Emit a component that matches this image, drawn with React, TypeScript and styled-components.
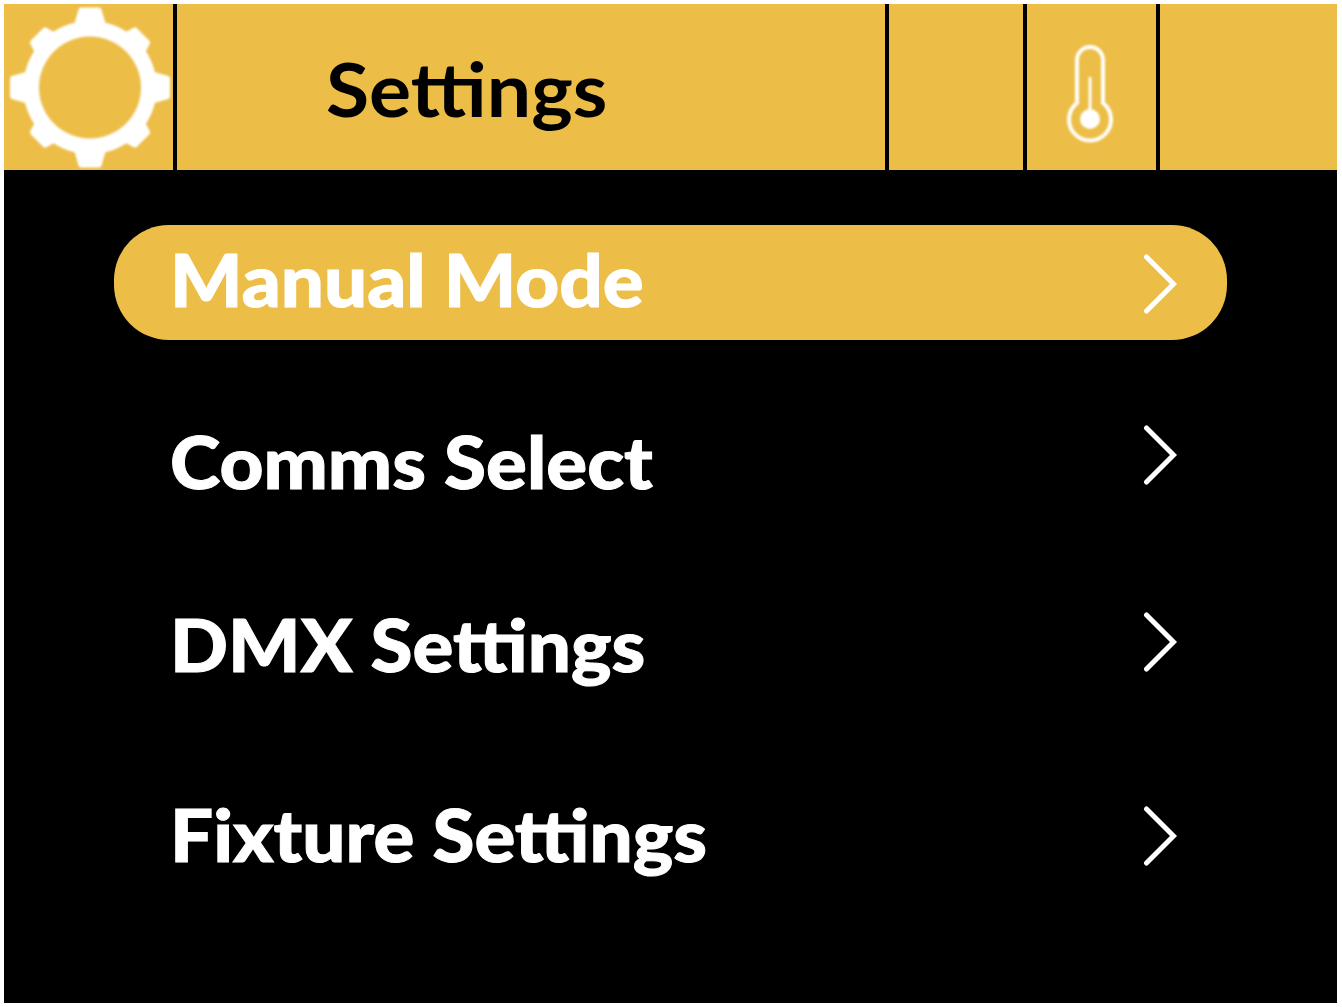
import React from 'react';
import styled, { createGlobalStyle } from 'styled-components';

const GlobalStyle = createGlobalStyle`
  html, body {
    margin: 0;
    padding: 0;
    background: #fff;
  }
`;

const Screen = styled.div`
  width: 1333px;
  height: 999px;
  margin: 4px 0 0 4px;
  background: #000;
  font-family: Lato, 'Open Sans', sans-serif;
  overflow: hidden;
`;

const Header = styled.header`
  height: 166px;
  background: #edbe47;
  display: grid;
  grid-template-columns: 169px 4px 708px 4px 134px 4px 129px 4px 1fr;
`;

const Divider = styled.div`
  background: #000;
`;

const Cell = styled.div`
  display: flex;
  align-items: center;
  justify-content: center;
  min-width: 0;
`;

const Title = styled.h1`
  margin: 2px 0 0 149px;
  width: 100%;
  font-size: 75px;
  font-weight: 700;
  line-height: 1;
  color: #000;
  transform: scaleX(1.05);
  transform-origin: 0 50%;
`;

const Menu = styled.nav`
  display: flex;
  flex-direction: column;
  padding: 55px 110px 0;
`;

const Row = styled.div<{ $active?: boolean; $top: number }>`
  height: 115px;
  margin-top: ${(p) => p.$top}px;
  padding: 0 48px 0 56px;
  border-radius: 55px;
  background: ${(p) => (p.$active ? '#edbe47' : 'transparent')};
  color: #fff;
  display: flex;
  align-items: center;
  justify-content: space-between;
`;

const Label = styled.span<{ $shift: number }>`
  font-size: 73px;
  font-weight: 900;
  line-height: 1;
  margin-top: ${(p) => p.$shift}px;
  -webkit-text-stroke: 1px #fff;
  transform: scaleX(1.045);
  transform-origin: 0 50%;
`;

const ChevronBox = styled.svg<{ $drop: number }>`
  width: 36px;
  height: 62px;
  flex: none;
  margin-top: ${(p) => p.$drop}px;
`;

const GearSvg = styled.svg`
  filter: blur(1px);
`;

const ThermoSvg = styled.svg`
  margin: 13px 4px 0 0;
  filter: blur(0.8px);
`;

function Gear() {
  const teeth = [0, 45, 90, 135, 180, 225, 270, 315];
  return (
    <GearSvg width="166" height="166" viewBox="0 0 166 166" aria-hidden="true">
      <g fill="#fff" stroke="#fff" strokeLinejoin="round">
        <circle cx="84" cy="83.500" r="65" strokeWidth="3" />
        {teeth.map((a) => (
          <path
            key={a}
            d={a % 90 === 0 ? 'M75 6 H93 L100 30 H68 Z' : 'M75 11 H93 L100 34 H68 Z'}
            strokeWidth="5"
            transform={`rotate(${a} 84 83.500)`}
          />
        ))}
      </g>
      <circle cx="84" cy="83.500" r="51" fill="#edbe47" />
    </GearSvg>
  );
}

function Thermometer() {
  return (
    <ThermoSvg width="50" height="98" viewBox="0 0 50 98" fill="none" stroke="#fff" aria-hidden="true">
      <path d="M12 58 V15 a13 13 0 0 1 26 0 V58 a21 21 0 1 1 -26 0 Z" strokeWidth="4" />
      <line x1="25" y1="32" x2="25" y2="66" strokeWidth="3" />
      <circle cx="25" cy="74" r="10" fill="#fff" stroke="none" />
    </ThermoSvg>
  );
}

function Chevron({ drop }: { drop: number }) {
  return (
    <ChevronBox $drop={drop} viewBox="0 0 36 62" aria-hidden="true">
      <path
        d="M3.500 4 L30.500 31 L3.500 58"
        fill="none"
        stroke="#fff"
        strokeWidth="5"
        strokeLinecap="round"
        strokeLinejoin="miter"
      />
    </ChevronBox>
  );
}

const items = [
  { label: 'Manual Mode', active: true, top: 0, shift: -7, drop: 3 },
  { label: 'Comms Select', active: false, top: 62, shift: 4, drop: -9 },
  { label: 'DMX Settings', active: false, top: 68, shift: 4, drop: -1 },
  { label: 'Fixture Settings', active: false, top: 75, shift: 4, drop: 7 },
];

export default function App() {
  return (
    <>
      <GlobalStyle />
      <Screen>
        <Header>
          <Cell>
            <Gear />
          </Cell>
          <Divider />
          <Cell>
            <Title>Settings</Title>
          </Cell>
          <Divider />
          <Cell />
          <Divider />
          <Cell>
            <Thermometer />
          </Cell>
          <Divider />
          <Cell />
        </Header>
        <Menu>
          {items.map((item) => (
            <Row key={item.label} $active={item.active} $top={item.top}>
              <Label $shift={item.shift}>{item.label}</Label>
              <Chevron drop={item.drop} />
            </Row>
          ))}
        </Menu>
      </Screen>
    </>
  );
}
